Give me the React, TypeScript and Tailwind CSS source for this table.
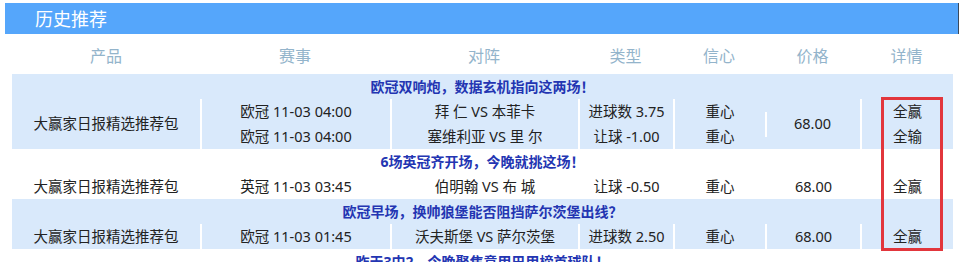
const FONT = { fontFamily: '"Noto Sans", "Noto Sans CJK SC", sans-serif' };

interface Line {
  match: string;
  teams: string;
  type: string;
  conf: string;
  result: string;
}

interface Group {
  title: string;
  tinted: boolean;
  lines: Line[];
}

const groups: Group[] = [
  {
    title: "欧冠双响炮，数据玄机指向这两场！",
    tinted: true,
    lines: [
      { match: "欧冠 11-03 04:00", teams: "拜 仁 VS 本菲卡", type: "进球数 3.75", conf: "重心", result: "全赢" },
      { match: "欧冠 11-03 04:00", teams: "塞维利亚 VS 里 尔", type: "让球 -1.00", conf: "重心", result: "全输" },
    ],
  },
  {
    title: "6场英冠齐开场，今晚就挑这场！",
    tinted: false,
    lines: [
      { match: "英冠 11-03 03:45", teams: "伯明翰 VS 布 城", type: "让球 -0.50", conf: "重心", result: "全赢" },
    ],
  },
  {
    title: "欧冠早场，换帅狼堡能否阻挡萨尔茨堡出线？",
    tinted: true,
    lines: [
      { match: "欧冠 11-03 01:45", teams: "沃夫斯堡 VS 萨尔茨堡", type: "进球数 2.50", conf: "重心", result: "全赢" },
    ],
  },
];

const heads = [
  { t: "产品", w: "w-[188px]" },
  { t: "赛事", w: "w-[190px]" },
  { t: "对阵", w: "w-[188px]" },
  { t: "类型", w: "w-[95px]" },
  { t: "信心", w: "w-[92px]" },
  { t: "价格", w: "w-[95px]" },
  { t: "详情", w: "w-[93px]" },
];

function GroupBlock({ g }: { g: Group }) {
  const bg = g.tinted ? "bg-[#d9e9fb]" : "bg-white";
  const multi = g.lines.length > 1;
  return (
    <div className={bg}>
      <div className="h-[25px] flex items-center justify-center text-[14px] font-bold text-[#2335b2]">
        {g.title}
      </div>
      <div className="flex text-[14.5px] text-[#222]">
        <div className="w-[188px] flex items-center justify-center">大赢家日报精选推荐包</div>
        <div className="flex flex-col">
          {g.lines.map((l, i) => (
            <div key={i} className="flex h-[25px]">
              <div className="w-[190px] border-l-2 border-white flex items-center justify-center">{l.match}</div>
              <div className="w-[188px] border-l-2 border-white flex items-center justify-center">{l.teams}</div>
              <div className="w-[95px] border-l-2 border-white flex items-center justify-center">{l.type}</div>
              <div className="w-[92px] border-l-2 border-white flex items-center justify-center">{l.conf}</div>
            </div>
          ))}
        </div>
        {multi ? (
          <div className="w-[95px] flex items-center">
            <div className="h-[25px] border-l-2 border-white" />
            <div className="flex-1 text-center pr-[2px]">68.00</div>
          </div>
        ) : (
          <div className="w-[95px] border-l-2 border-white flex items-center justify-center">68.00</div>
        )}
        <div className="w-[93px] border-l-2 border-white flex flex-col">
          {g.lines.map((l, i) => (
            <div key={i} className="h-[25px] flex items-center justify-center">{l.result}</div>
          ))}
        </div>
      </div>
    </div>
  );
}

export default function App() {
  return (
    <div className="relative w-[964px] h-[262px] overflow-hidden bg-white" style={FONT}>
      <div className="mt-[3px] ml-[5px] w-[954px] h-[31px] bg-[#55a6fb] border-r border-[#3b4a5c] flex items-center pl-[30px]">
        <span className="text-white text-[18px] leading-none">历史推荐</span>
      </div>

      <div className="ml-[12px] w-[941px]">
        <div className="flex h-[40px] pt-[4px] items-center text-[16px] text-[#93b4cb]">
          {heads.map((h) => (
            <div key={h.t} className={`${h.w} text-center`}>{h.t}</div>
          ))}
        </div>
        {groups.map((g, i) => (
          <GroupBlock key={i} g={g} />
        ))}
        <div className="h-[25px] flex items-center justify-center text-[14px] font-bold text-[#2335b2]">
          昨天3中2，今晚聚焦意甲巴甲榜首球队！
        </div>
      </div>

      <div className="absolute left-[881px] top-[97px] w-[62px] h-[154px] border-[3px] border-[#e2363c]" />
    </div>
  );
}
